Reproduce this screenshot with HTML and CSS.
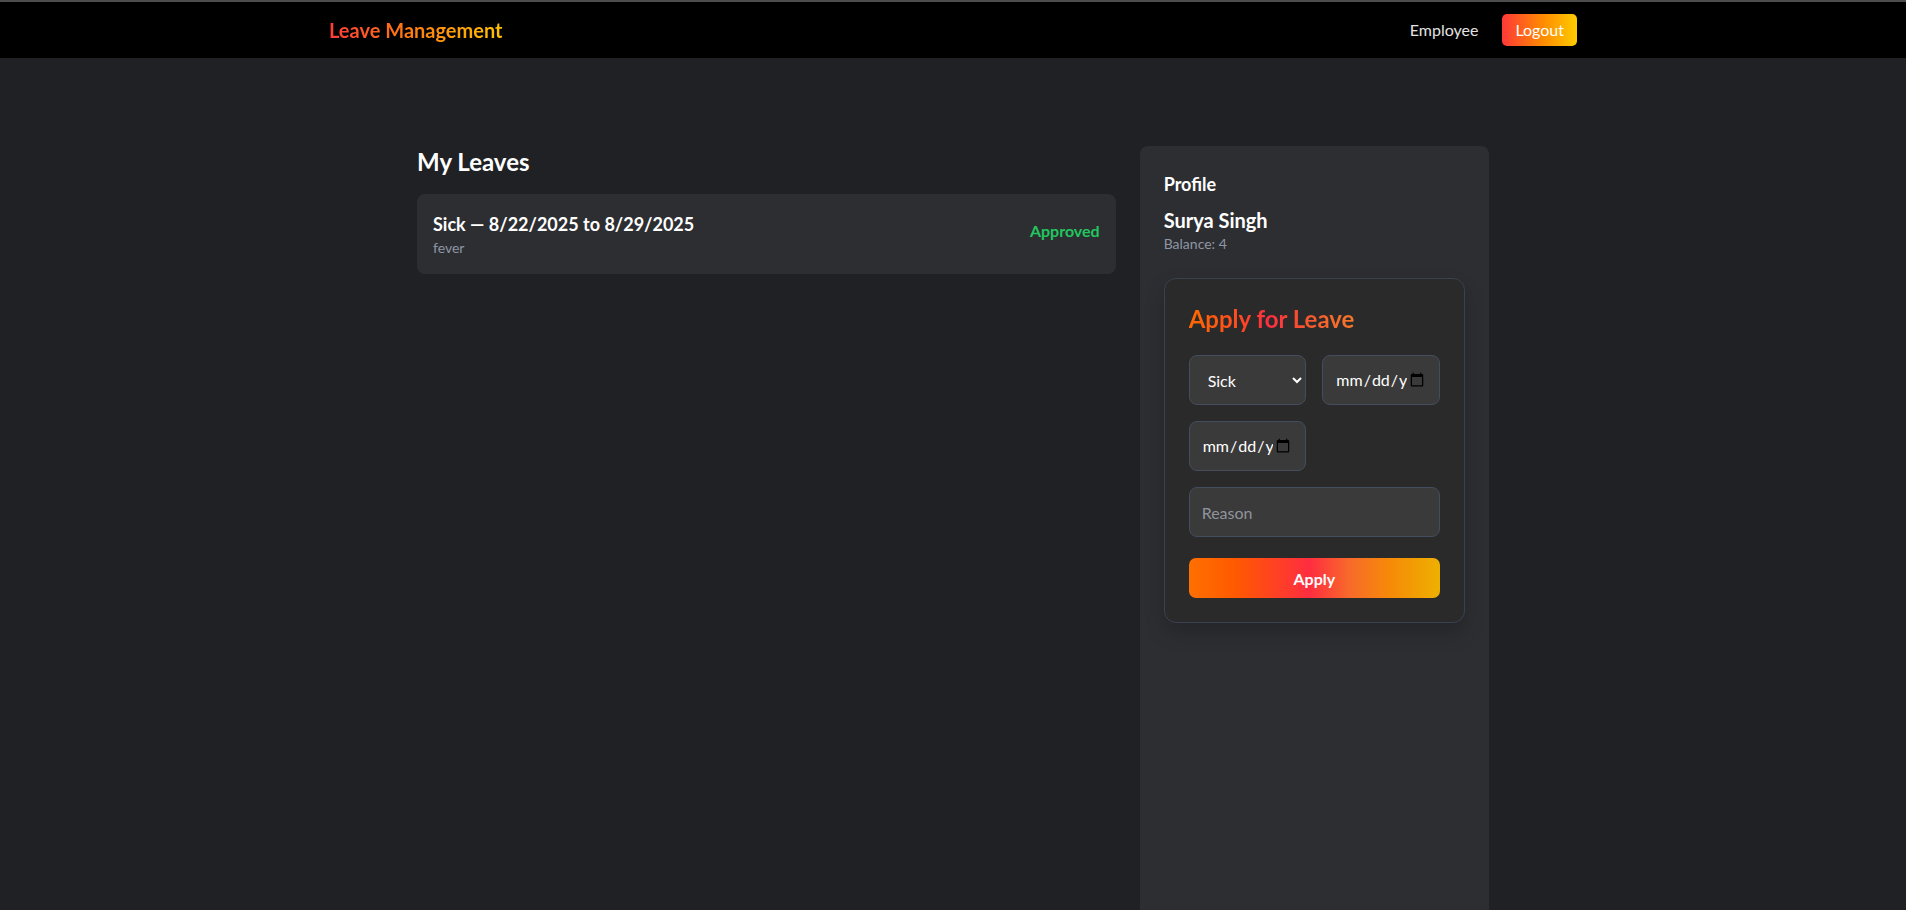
FILE: index.html
```html
<!DOCTYPE html>
<html lang="en">
<head>
<meta charset="utf-8">
<title>Leave Management</title>
<link rel="stylesheet" href="styles.css">
</head>
<body>
<nav class="nav">
  <div class="nav-inner">
    <div class="brand">Leave Management</div>
    <div class="nav-right">
      <span class="role">Employee</span>
      <button class="logout">Logout</button>
    </div>
  </div>
</nav>
<main class="main">
  <section class="leaves">
    <h2 class="section-title">My Leaves</h2>
    <div class="leave-card">
      <div class="leave-info">
        <div class="leave-title">Sick — 8/22/2025 to 8/29/2025</div>
        <div class="leave-reason">fever</div>
      </div>
      <div class="leave-status">Approved</div>
    </div>
  </section>
  <aside class="panel">
    <h3 class="panel-title">Profile</h3>
    <div class="profile-name">Surya Singh</div>
    <div class="profile-balance">Balance: 4</div>
    <form class="apply-box">
      <h2 class="apply-title"><span>Apply for Leave</span></h2>
      <div class="apply-grid">
        <select class="field select">
          <option>Sick</option>
          <option>Casual</option>
          <option>Earned</option>
        </select>
        <input class="field" type="date">
        <input class="field" type="date">
      </div>
      <input class="field reason" type="text" placeholder="Reason">
      <button class="apply-btn" type="button">Apply</button>
    </form>
  </aside>
</main>
</body>
</html>
```

FILE: styles.css
```css
* { box-sizing: border-box; }

html, body {
  margin: 0;
  padding: 0;
}

body {
  background: #202124;
  color: #ffffff;
  font-family: "Segoe UI", Lato, "Noto Sans", sans-serif;
  font-size: 16px;
  line-height: 24px;
}

.nav {
  background: #000000;
  border-top: 2px solid #4d4d4d;
  height: 58px;
}

.nav-inner {
  max-width: 1280px;
  height: 100%;
  margin: 0 auto;
  padding: 0 16px;
  display: flex;
  align-items: center;
  justify-content: space-between;
}

.brand {
  font-size: 20px;
  line-height: 28px;
  font-weight: 700;
  background: linear-gradient(90deg, #ff3b3b 0%, #ff7a10 45%, #ffc400 100%);
  -webkit-background-clip: text;
  background-clip: text;
  color: transparent;
}

.nav-right {
  display: flex;
  align-items: center;
  gap: 24px;
}

.role {
  color: #e3e3e3;
  font-size: 16px;
}

.logout {
  font-family: inherit;
  font-size: 16px;
  line-height: 20px;
  color: #ffffff;
  border: none;
  border-radius: 5px;
  padding: 6px 13px;
  background: linear-gradient(90deg, #ff3838 0%, #ff8c00 55%, #ffcc00 100%);
}

.main {
  max-width: 1072px;
  margin: 0 auto;
  padding-top: 88px;
  display: grid;
  grid-template-columns: 2fr 1fr;
  gap: 24px;
  align-items: start;
}

.section-title {
  margin: 0 0 16px;
  font-size: 24px;
  line-height: 32px;
  font-weight: 700;
}

.leave-card {
  background: #2d2e32;
  border-radius: 8px;
  padding: 16px;
  display: flex;
  align-items: center;
  justify-content: space-between;
}

.leave-title {
  font-size: 18px;
  line-height: 28px;
  font-weight: 700;
}

.leave-reason {
  font-size: 14px;
  line-height: 20px;
  color: #8e96a3;
}

.leave-status {
  color: #22c55e;
  font-weight: 700;
  margin-bottom: 6px;
}

.panel {
  background: #2d2e32;
  border-radius: 8px;
  padding: 24px;
  min-height: 100vh;
}

.panel-title {
  margin: 0;
  font-size: 18px;
  line-height: 28px;
  font-weight: 700;
}

.profile-name {
  margin-top: 8px;
  font-size: 20px;
  line-height: 28px;
  font-weight: 700;
}

.profile-balance {
  font-size: 14px;
  line-height: 20px;
  color: #8e96a3;
}

.apply-box {
  margin-top: 24px;
  background: #2a2a2b;
  border: 1px solid #384252;
  border-radius: 12px;
  padding: 24px;
  box-shadow: 0 10px 20px rgba(0, 0, 0, 0.18);
}

.apply-title {
  margin: 0 0 20px;
  font-size: 24px;
  line-height: 32px;
  font-weight: 700;
}

.apply-title span {
  display: inline-block;
  background: linear-gradient(90deg, #ff6a00 0%, #ff4a20 30%, #ff2e40 48%, #f6582f 72%, #f5772a 100%);
  -webkit-background-clip: text;
  background-clip: text;
  color: transparent;
}

.apply-grid {
  display: grid;
  grid-template-columns: 1fr 1fr;
  gap: 16px;
}

.field {
  display: block;
  width: 100%;
  min-width: 0;
  height: 50px;
  padding: 12px;
  font-family: inherit;
  font-size: 16px;
  line-height: 24px;
  color: #ffffff;
  background: #3a3a3b;
  border: 1px solid #434d5d;
  border-radius: 8px;
  outline: none;
}

.select {
  padding-left: 14px;
  padding-right: 6px;
}

.reason {
  margin-top: 16px;
}

.reason::placeholder {
  color: #8f949c;
}

.apply-btn {
  display: block;
  width: 100%;
  margin-top: 21px;
  height: 40px;
  border: none;
  border-radius: 7px;
  font-family: inherit;
  font-size: 16px;
  font-weight: 700;
  color: #ffffff;
  background: linear-gradient(90deg, #ff7000 0%, #ff5a00 18%, #ff2d40 48%, #f86a2a 64%, #f68a08 80%, #eeb000 100%);
}
```
